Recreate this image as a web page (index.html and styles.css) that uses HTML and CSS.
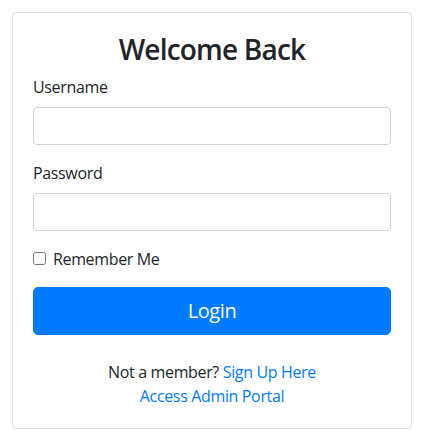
FILE: index.html
```html
<!DOCTYPE html>
<html lang="en">
<head>
<meta charset="utf-8">
<title>Login</title>
<link rel="stylesheet" href="styles.css">
</head>
<body>
<div class="card">
  <h3 class="title">Welcome Back</h3>
  <form class="form">
    <div class="group">
      <label class="label" for="username">Username</label>
      <input class="control" id="username" type="text">
    </div>
    <div class="group">
      <label class="label" for="password">Password</label>
      <input class="control" id="password" type="password">
    </div>
    <div class="group check">
      <input class="check-input" id="remember" type="checkbox">
      <label class="check-label" for="remember">Remember Me</label>
    </div>
    <button class="btn" type="button">Login</button>
  </form>
  <div class="footer">
    <p class="line">Not a member? <a class="link" href="#">Sign Up Here</a></p>
    <p class="line"><a class="link" href="#">Access Admin Portal</a></p>
  </div>
</div>
</body>
</html>
```
FILE: styles.css
```css
* { box-sizing: border-box; }
html, body { margin: 0; padding: 0; background: #fff; }
body {
  padding: 12px 10px;
  font-family: "Open Sans", "Noto Sans", sans-serif;
  font-size: 16px;
  line-height: 1.5;
  letter-spacing: -0.35px;
  color: #212529;
}
.card {
  width: 400px;
  margin-left: 2px;
  border: 1px solid rgba(0,0,0,.125);
  border-radius: 4px;
  padding: 20px;
}
.title {
  margin: 0 0 8px;
  font-size: 28px;
  font-weight: 600;
  line-height: 1.2;
  letter-spacing: -0.8px;
  text-align: center;
}
.form { margin: 0; }
.group { margin-bottom: 16px; }
.label { display: block; margin-bottom: 8px; }
.control {
  display: block;
  width: 100%;
  height: 38px;
  padding: 6px 12px;
  font: inherit;
  border: 1px solid #ced4da;
  border-radius: 4px;
  background: #fff;
}
.check { display: flex; align-items: center; gap: 7px; }
.check-input { margin: 0; width: 13px; height: 13px; }
.btn {
  display: block;
  width: 100%;
  height: 48px;
  border: 1px solid #007bff;
  border-radius: 5px;
  background: #007bff;
  color: #fff;
  font: inherit;
  font-size: 20px;
  line-height: 1.5;
  letter-spacing: -0.4px;
}
.footer { margin-top: 25px; text-align: center; }
.line { margin: 0; }
.link { color: #007bff; text-decoration: none; }
```
